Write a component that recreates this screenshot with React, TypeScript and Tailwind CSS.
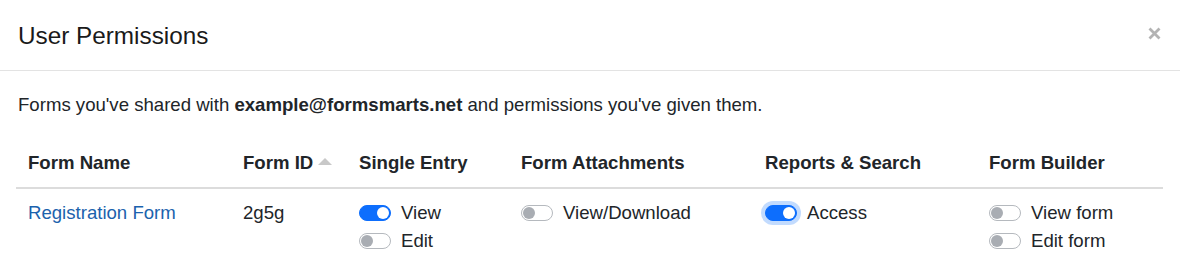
import React from "react";

function Switch({ on, focus }: { on?: boolean; focus?: boolean }) {
  return (
    <span
      className={
        "relative inline-block w-[32px] h-[16px] rounded-full border shrink-0 " +
        (on ? "bg-[#0d6efd] border-[#0d6efd] " : "bg-white border-[#b5b9be] ") +
        (focus ? "shadow-[0_0_0_4px_rgba(13,110,253,0.25)]" : "")
      }
    >
      <span
        className={
          "absolute top-[1px] w-[12px] h-[12px] rounded-full " +
          (on ? "right-[1px] bg-white" : "left-[1px] bg-[#a9adb3]")
        }
      />
    </span>
  );
}

function Opt({ on, focus, label }: { on?: boolean; focus?: boolean; label: string }) {
  return (
    <div className="flex items-center h-[24px] gap-[10px]">
      <Switch on={on} focus={focus} />
      <span>{label}</span>
    </div>
  );
}

export default function App() {
  return (
    <div
      className="w-[1180px] h-[279px] bg-white text-[#212529] overflow-hidden"
      style={{ fontFamily: '"Liberation Sans", Arial, Helvetica, sans-serif' }}
    >
      <div className="h-[71px] flex items-center justify-between pl-[18px] pr-[19px] border-b border-[#e3e3e3]">
        <h5 className="text-[24.3px] leading-[29px] font-normal text-[#1a1a1a]">User Permissions</h5>
        <svg width="13" height="13" viewBox="0 0 13 13" className="mt-[-4px]">
          <path d="M1.5 1.5 L11.5 11.5 M11.5 1.5 L1.5 11.5" stroke="#b3b3b3" strokeWidth="2.8" strokeLinecap="butt" />
        </svg>
      </div>
      <div className="pl-[16px] pr-[17px] text-[18.6px] leading-[24px]">
        <p className="pl-[2px] mt-[22px] mb-[22px]">
          Forms you've shared with <b>example@formsmarts.net</b> and permissions you've given them.
        </p>
        <div className="grid grid-cols-[215px_116px_162px_244px_224px_186px]">
          <div className="p-[12px] font-bold border-b-2 border-[#dcdcdc]">Form Name</div>
          <div className="p-[12px] font-bold border-b-2 border-[#dcdcdc] flex items-center gap-[5px]">
            <span>Form ID</span>
            <svg width="14" height="8" viewBox="0 0 14 8" className="mt-[-2px]">
              <path d="M7 0 L14 7 L0 7 Z" fill="#c8c8c8" />
            </svg>
          </div>
          <div className="p-[12px] font-bold border-b-2 border-[#dcdcdc]">Single Entry</div>
          <div className="p-[12px] font-bold border-b-2 border-[#dcdcdc]">Form Attachments</div>
          <div className="p-[12px] font-bold border-b-2 border-[#dcdcdc]">Reports &amp; Search</div>
          <div className="p-[12px] font-bold border-b-2 border-[#dcdcdc]">Form Builder</div>

          <div className="p-[12px]">
            <a className="text-[#1b62ad]">Registration Form</a>
          </div>
          <div className="p-[12px]">2g5g</div>
          <div className="p-[12px] flex flex-col gap-[4px]">
            <Opt on label="View" />
            <Opt label="Edit" />
          </div>
          <div className="p-[12px]">
            <Opt label="View/Download" />
          </div>
          <div className="p-[12px]">
            <Opt on focus label="Access" />
          </div>
          <div className="p-[12px] flex flex-col gap-[4px]">
            <Opt label="View form" />
            <Opt label="Edit form" />
          </div>
        </div>
      </div>
    </div>
  );
}
